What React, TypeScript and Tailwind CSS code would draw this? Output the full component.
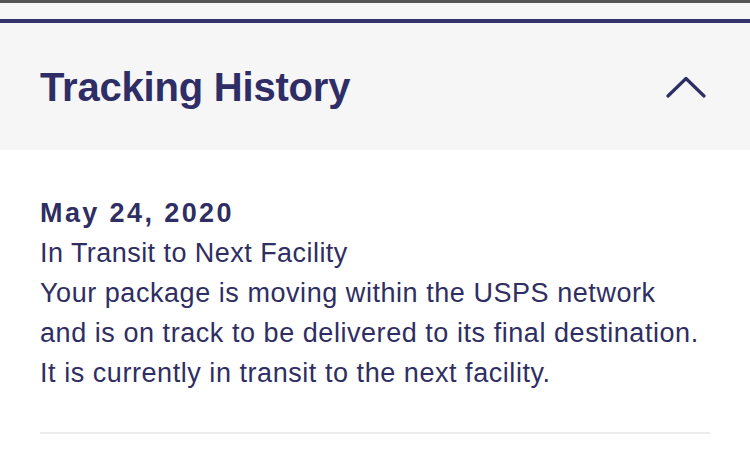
export default function App() {
  return (
    <div className="min-h-screen bg-white font-['Liberation_Sans',Arial,sans-serif] text-[#2f2e63]">
      {/* top strip */}
      <div className="h-[3px] bg-[#565656]" />
      <div className="h-[16px] bg-[#f7f7f7]" />
      <div className="h-[4px] bg-[#34336a]" />

      {/* HEADER */}
      <div className="h-[127px] bg-[#f6f6f6] pl-[40px] pr-[44px] flex items-center justify-between">
        <h2 className="text-[40px] leading-none font-bold text-[#2e2d66] tracking-[-0.2px]">
          Tracking History
        </h2>
        <svg width="40" height="22" viewBox="0 0 40 22" fill="none">
          <polyline
            points="2,20 20,2.5 38,20"
            stroke="#2e2d66"
            strokeWidth="3.2"
            strokeLinecap="round"
            strokeLinejoin="round"
          />
        </svg>
      </div>

      {/* EVENT */}
      <div className="px-[40px] pt-[43px]">
        <div className="text-[27px] leading-[40px] font-bold tracking-[2.4px]">
          May 24, 2020
        </div>
        <div className="text-[27px] leading-[40px] tracking-[0.45px]">
          In Transit to Next Facility
        </div>
        <p className="text-[27px] leading-[40px] tracking-[0.55px] whitespace-nowrap">
          Your package is moving within the USPS network
          <br />
          and is on track to be delivered to its final destination.
          <br />
          It is currently in transit to the next facility.
        </p>
        <div className="mt-[39px] h-[2px] bg-[#ececec]" />
      </div>
    </div>
  );
}
